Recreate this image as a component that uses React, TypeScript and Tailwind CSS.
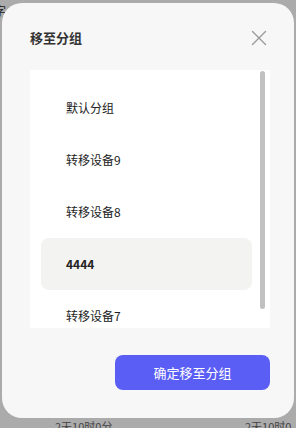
import React from "react";

const items = ["默认分组", "转移设备9", "转移设备8", "4444", "转移设备7", "转移设备6"];

export default function App() {
  const font = { fontFamily: '"Noto Sans CJK SC", "Noto Sans", sans-serif' };
  return (
    <div className="relative w-[296px] h-[428px] overflow-hidden bg-[#ababab]" style={font}>
      <div className="absolute left-[-6px] top-[2px] text-[12px] text-[#222]">字</div>
      <div className="absolute left-[55px] top-[419px] text-[11px] leading-[14px] text-[#444]">2天10时0分</div>
      <div className="absolute left-[245px] top-[419px] text-[11px] leading-[14px] text-[#444]">2天10时0分</div>
      <div className="absolute left-[2px] top-[3px] w-[292px] h-[415px] rounded-[20px] bg-[#f7f7f7] flex flex-col">
        <div className="flex items-center justify-between pl-[28px] pr-[28px] h-[67px] pt-[2px]">
          <span className="text-[13px] font-semibold text-[#333]">移至分组</span>
          <svg width="16" height="16" viewBox="0 0 16 16" className="mr-[-1px]">
            <path d="M1.5 1.5 L14.5 14.5 M14.5 1.5 L1.5 14.5" stroke="#9a9a9a" strokeWidth="1.4" strokeLinecap="round" />
          </svg>
        </div>
        <div className="ml-[28px] w-[240px] h-[258px] bg-white flex overflow-hidden">
          <div className="flex-1 pl-[11px] pt-[12px] flex flex-col">
            {items.map((t, i) => (
              <div
                key={t}
                className={
                  "h-[52px] shrink-0 w-[211px] flex items-center pl-[25px] rounded-[8px] text-[12px] text-[#222] " +
                  (i === 3 ? "bg-[#f3f3f1] font-semibold" : "")
                }
              >
                {t}
              </div>
            ))}
          </div>
          <div className="w-[10px] pt-[1px] pr-[3px]">
            <div className="w-[5px] h-[238px] rounded-full bg-[#c1c1c1]" />
          </div>
        </div>
        <div className="flex justify-end pr-[24px] pt-[27px]">
          <button className="w-[155px] h-[35px] rounded-[8px] bg-[#5b5ef5] text-white text-[13px]">
            确定移至分组
          </button>
        </div>
      </div>
    </div>
  );
}
